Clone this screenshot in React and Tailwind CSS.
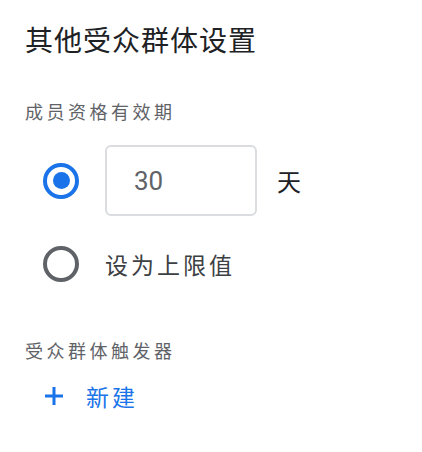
import React, { useState } from 'react';

const cjk = { fontFamily: '"Noto Sans CJK SC", "Noto Sans", sans-serif' };

const Radio = ({ checked, onClick }) => (
  <button
    onClick={onClick}
    className={`flex h-[36px] w-[36px] shrink-0 items-center justify-center rounded-full border-[4px] ${
      checked ? 'border-[#1a73e8]' : 'border-[#5f6368]'
    }`}
  >
    {checked && <span className="h-[17px] w-[17px] rounded-full bg-[#1a73e8]" />}
  </button>
);

export default function App() {
  const [mode, setMode] = useState('days');
  const [days, setDays] = useState('30');

  return (
    <div className="min-h-screen bg-white pl-[25px] pt-[21px]" style={cjk}>
      <h1 className="text-[28px] leading-[36px] tracking-[1px] text-[#202124]">其他受众群体设置</h1>

      <h2 className="mt-[42px] text-[18px] leading-[24px] tracking-[3.5px] text-[#5f6368]">成员资格有效期</h2>

      {/* membership duration */}
      <div className="mt-[22px] flex items-center">
        <div className="ml-[18px]">
          <Radio checked={mode === 'days'} onClick={() => setMode('days')} />
        </div>
        <input
          value={days}
          onChange={(e) => setDays(e.target.value)}
          className="ml-[26px] h-[71px] w-[152px] rounded-[6px] border-2 border-[#dadce0] px-[27px] text-[26px] text-[#5f6368] outline-none"
          style={{ fontFamily: 'Roboto, sans-serif' }}
        />
        <span className="ml-[20px] text-[24px] text-[#202124]">天</span>
      </div>

      <div className="mt-[30px] flex items-center">
        <div className="ml-[18px]">
          <Radio checked={mode === 'max'} onClick={() => setMode('max')} />
        </div>
        <span className="ml-[26px] text-[23px] tracking-[3px] text-[#3c4043]">设为上限值</span>
      </div>

      <h2 className="mt-[56px] text-[18px] leading-[24px] tracking-[3.5px] text-[#5f6368]">受众群体触发器</h2>

      <button className="mt-[17px] flex items-center text-[#1a73e8]">
        <svg width="20" height="20" viewBox="0 0 20 20" className="ml-[19px]">
          <path d="M10 1v18M1 10h18" stroke="currentColor" strokeWidth="3" />
        </svg>
        <span className="ml-[22px] text-[23px] tracking-[3px]">新建</span>
      </button>
    </div>
  );
}
